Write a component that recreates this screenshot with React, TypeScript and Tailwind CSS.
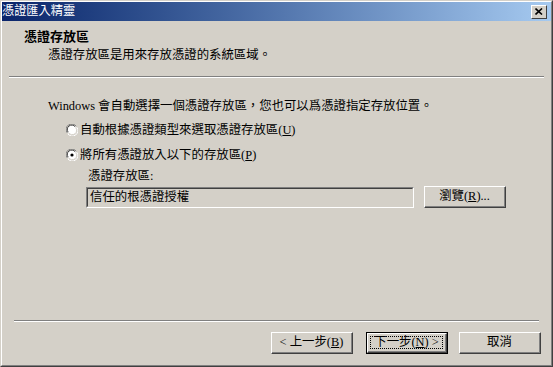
import React from "react";

const font = { fontFamily: '"Liberation Serif", "Noto Sans CJK TC", serif' };

function Radio({ checked }: { checked?: boolean }) {
  return (
    <svg width="12" height="12" viewBox="0 0 12 12" className="shrink-0">
      <circle cx="6" cy="6" r="5" fill="#ffffff" stroke="none" />
      <path d="M10.2 2.2 A5.3 5.3 0 0 0 1.2 8.8" fill="none" stroke="#808080" strokeWidth="1" />
      <path d="M9.2 2.8 A4.3 4.3 0 0 0 2.2 8.2" fill="none" stroke="#404040" strokeWidth="1" />
      <path d="M1.8 9.8 A5.3 5.3 0 0 0 10.8 3.2" fill="none" stroke="#ffffff" strokeWidth="1" />
      <path d="M2.8 8.9 A4.3 4.3 0 0 0 9.8 3.8" fill="none" stroke="#d4d0c8" strokeWidth="1" />
      {checked && <circle cx="6" cy="6" r="1.6" fill="#000" />}
    </svg>
  );
}

function Btn({
  children,
  focused,
  className = "",
}: {
  children: React.ReactNode;
  focused?: boolean;
  className?: string;
}) {
  if (focused) {
    return (
      <div className={"border border-black " + className}>
        <div className="h-full border-t border-l border-t-white border-l-white border-r border-b border-r-[#404040] border-b-[#404040]">
          <div className="h-full border-r border-b border-r-[#808080] border-b-[#808080] p-[2px]">
            <div className="h-full border border-dotted border-black flex items-center justify-center text-[12.4px] text-black">
              {children}
            </div>
          </div>
        </div>
      </div>
    );
  }
  return (
    <div
      className={
        "border-t border-l border-t-white border-l-white border-r border-b border-r-[#404040] border-b-[#404040] " +
        className
      }
    >
      <div className="h-full border-r border-b border-r-[#808080] border-b-[#808080] flex items-center justify-center text-[12.4px] text-black">
        {children}
      </div>
    </div>
  );
}

export default function App() {
  return (
    <div style={font} className="w-[553px] h-[367px] bg-[#d4d0c8] overflow-hidden">
      <div className="w-full h-full border-t border-l border-t-[#d4d0c8] border-l-[#d4d0c8] border-r border-b border-r-[#404040] border-b-[#404040]">
        <div className="w-full h-full flex flex-col border-t border-l border-t-white border-l-white border-r border-b border-r-[#808080] border-b-[#808080]">
          {/* title bar */}
          <div className="h-[19px] flex items-center justify-between bg-gradient-to-r from-[#0a246a] to-[#a6caf0] pl-[0px] pr-[4px]">
            <span className="text-white text-[12.2px] leading-none">憑證匯入精靈</span>
            <div className="w-[16px] h-[14px] bg-[#d4d0c8] border-t border-l border-t-white border-l-white border-r border-b border-r-[#404040] border-b-[#404040] flex items-center justify-center">
              <svg width="8" height="7" viewBox="0 0 8 7">
                <path d="M0.5 0.5 L7 6.5 M7 0.5 L0.5 6.5" stroke="#000" strokeWidth="1.6" />
              </svg>
            </div>
          </div>

          {/* header */}
          <div className="h-[55px] pl-[22px] pt-[8px]">
            <div className="text-[13px] font-bold leading-[16px] text-black">憑證存放區</div>
            <div className="pl-[24px] pt-[2px] text-[12.4px] leading-[16px] text-black">
              憑證存放區是用來存放憑證的系統區域。
            </div>
          </div>
          <div className="mx-[7px] border-t border-t-[#808080] border-b border-b-white" />

          {/* body */}
          <div className="flex-1 pl-[46px] pt-[20px] text-[12.4px] text-black">
            <div className="leading-[16px]">Windows 會自動選擇一個憑證存放區，您也可以爲憑證指定存放位置。</div>
            <div className="pl-[18px] pt-[8px] flex items-center gap-[2px] leading-[16px]">
              <Radio />
              <span>
                自動根據憑證類型來選取憑證存放區(<span className="underline">U</span>)
              </span>
            </div>
            <div className="pl-[18px] pt-[9px] flex items-center gap-[2px] leading-[16px]">
              <Radio checked />
              <span>
                將所有憑證放入以下的存放區(<span className="underline">P</span>)
              </span>
            </div>
            <div className="pl-[40px] pt-[5px] leading-[16px]">憑證存放區:</div>
            <div className="pl-[38px] pt-[2px] flex items-center gap-[10px]">
              <div className="w-[328px] h-[21px] border-t border-l border-t-[#808080] border-l-[#808080] border-r border-b border-r-white border-b-white">
                <div className="h-full border-t border-l border-t-[#404040] border-l-[#404040] border-r border-b border-r-[#d4d0c8] border-b-[#d4d0c8] flex items-center pl-[2px] leading-none">
                  信任的根憑證授權
                </div>
              </div>
              <Btn className="w-[82px] h-[22px]">
                瀏覽(<span className="underline">R</span>)...
              </Btn>
            </div>
          </div>

          <div className="mx-[12px] border-t border-t-[#808080] border-b border-b-white" />
          {/* footer */}
          <div className="h-[43px] flex items-start justify-end gap-[11px] pr-[10px] pt-[10px]">
            <Btn className="w-[82px] h-[22px] mr-[2px]">
              &lt; 上一步(<span className="underline">B</span>)
            </Btn>
            <Btn focused className="w-[82px] h-[22px]">
              下一步(<span className="underline">N</span>) &gt;
            </Btn>
            <Btn className="w-[82px] h-[22px]">取消</Btn>
          </div>
        </div>
      </div>
    </div>
  );
}
